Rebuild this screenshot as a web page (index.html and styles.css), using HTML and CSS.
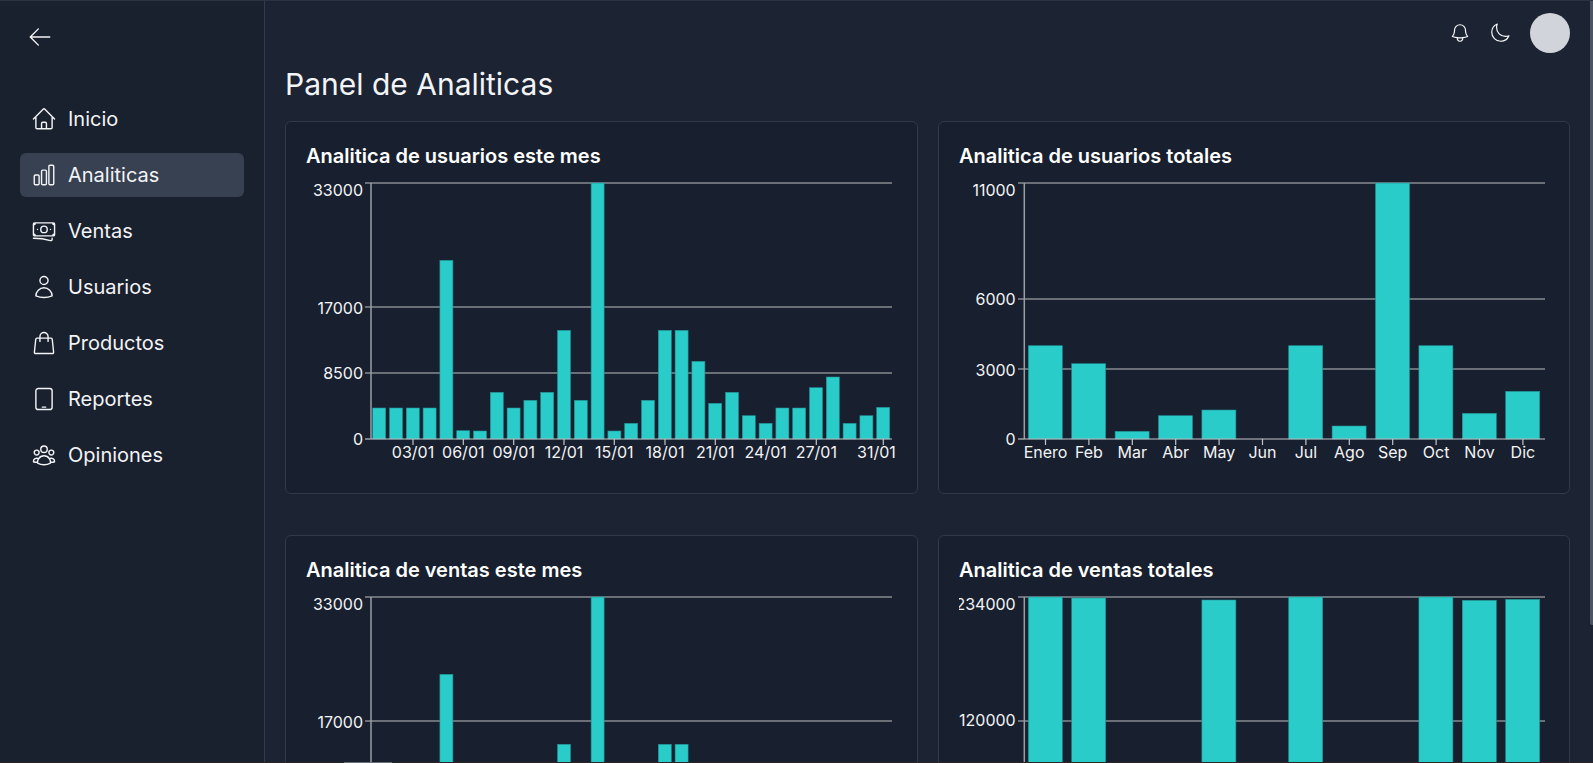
FILE: index.html
```html
<!DOCTYPE html>
<html lang="es">
<head>
    <meta charset="utf-8">
    <title>Panel de Analiticas</title>
    <link rel="stylesheet" href="styles.css">
</head>
<body>
<div class="app">
    <aside class="sidebar">
        <button class="back-btn" type="button">
            <svg class="icon" viewBox="0 0 24 24"><path d="M10.5 19.5L3 12m0 0l7.5-7.5M3 12h18"/></svg>
        </button>
        <nav class="nav">
            <a class="nav-item" href="#">
                <svg class="icon" viewBox="0 0 24 24"><path d="M2.25 12l8.954-8.955c.44-.439 1.152-.439 1.591 0L21.75 12M4.5 9.75v10.125c0 .621.504 1.125 1.125 1.125H9.75v-4.875c0-.621.504-1.125 1.125-1.125h2.25c.621 0 1.125.504 1.125 1.125V21h4.125c.621 0 1.125-.504 1.125-1.125V9.75M8.25 21h8.25"/></svg>
                Inicio
            </a>
            <a class="nav-item active" href="#">
                <svg class="icon" viewBox="0 0 24 24"><path d="M3 13.125C3 12.504 3.504 12 4.125 12h2.25c.621 0 1.125.504 1.125 1.125v6.75C7.5 20.496 6.996 21 6.375 21h-2.25A1.125 1.125 0 013 19.875v-6.75zM9.75 8.625c0-.621.504-1.125 1.125-1.125h2.25c.621 0 1.125.504 1.125 1.125v11.25c0 .621-.504 1.125-1.125 1.125h-2.25a1.125 1.125 0 01-1.125-1.125V8.625zM16.5 4.125c0-.621.504-1.125 1.125-1.125h2.25C20.496 3 21 3.504 21 4.125v15.75c0 .621-.504 1.125-1.125 1.125h-2.25a1.125 1.125 0 01-1.125-1.125V4.125z"/></svg>
                Analiticas
            </a>
            <a class="nav-item" href="#">
                <svg class="icon" viewBox="0 0 24 24"><path d="M2.25 18.75a60.07 60.07 0 0115.797 2.101c.727.198 1.453-.342 1.453-1.096V18.75M3.75 4.5v.75A.75.75 0 013 6h-.75m0 0v-.375c0-.621.504-1.125 1.125-1.125H20.25M2.25 6v9m18-10.5v.75c0 .414.336.75.75.75h.75m-1.5-1.5h.375c.621 0 1.125.504 1.125 1.125v9.75c0 .621-.504 1.125-1.125 1.125h-.375m1.5-1.5H21a.75.75 0 00-.75.75v.75m0 0H3.75m0 0h-.375a1.125 1.125 0 01-1.125-1.125V15m1.5 1.5v-.75A.75.75 0 003 15h-.75M15 10.5a3 3 0 11-6 0 3 3 0 016 0zm3 0h.008v.008H18V10.5zm-12 0h.008v.008H6V10.5z"/></svg>
                Ventas
            </a>
            <a class="nav-item" href="#">
                <svg class="icon" viewBox="0 0 24 24"><path d="M15.75 6a3.75 3.75 0 11-7.5 0 3.75 3.75 0 017.5 0zM4.501 20.118a7.5 7.5 0 0114.998 0A17.933 17.933 0 0112 21.75c-2.676 0-5.216-.584-7.499-1.632z"/></svg>
                Usuarios
            </a>
            <a class="nav-item" href="#">
                <svg class="icon" viewBox="0 0 24 24"><path d="M15.75 10.5V6a3.75 3.75 0 10-7.5 0v4.5m11.356-1.993l1.263 12c.07.665-.45 1.243-1.119 1.243H4.25a1.125 1.125 0 01-1.12-1.243l1.264-12A1.125 1.125 0 015.513 7.5h12.974c.576 0 1.059.435 1.119 1.007z"/></svg>
                Productos
            </a>
            <a class="nav-item" href="#">
                <svg class="icon" viewBox="0 0 24 24"><path d="M10.5 19.5h3m-6.75 2.25h10.5a2.25 2.25 0 002.25-2.25v-15a2.25 2.25 0 00-2.25-2.25H6.75A2.25 2.25 0 004.5 4.5v15a2.25 2.25 0 002.25 2.25z"/></svg>
                Reportes
            </a>
            <a class="nav-item" href="#">
                <svg class="icon" viewBox="0 0 24 24"><path d="M18 18.72a9.094 9.094 0 003.741-.479 3 3 0 00-4.682-2.72m.94 3.198l.001.031c0 .225-.012.447-.037.666A11.944 11.944 0 0112 21c-2.17 0-4.207-.576-5.963-1.584A6.062 6.062 0 016 18.719m12 0a5.971 5.971 0 00-.941-3.197m0 0A5.995 5.995 0 0012 12.75a5.995 5.995 0 00-5.058 2.772m0 0a3 3 0 00-4.681 2.72 8.986 8.986 0 003.74.477m.94-3.197a5.971 5.971 0 00-.94 3.197M15 6.75a3 3 0 11-6 0 3 3 0 016 0zm6 3a2.25 2.25 0 11-4.5 0 2.25 2.25 0 014.5 0zm-13.5 0a2.25 2.25 0 11-4.5 0 2.25 2.25 0 014.5 0z"/></svg>
                Opiniones
            </a>
        </nav>
    </aside>

    <main class="main">
        <header class="topbar">
            <svg class="icon icon-top icon-bell" viewBox="0 0 24 24"><path d="M14.857 17.082a23.848 23.848 0 005.454-1.31A8.967 8.967 0 0118 9.75v-.7V9A6 6 0 006 9v.75a8.967 8.967 0 01-2.312 6.022c1.733.64 3.56 1.085 5.455 1.31m5.714 0a24.255 24.255 0 01-5.714 0m5.714 0a3 3 0 11-5.714 0"/></svg>
            <svg class="icon icon-top" viewBox="0 0 24 24"><path d="M21.752 15.002A9.718 9.718 0 0118 15.75c-5.385 0-9.75-4.365-9.75-9.75 0-1.33.266-2.597.748-3.752A9.753 9.753 0 003 11.25C3 16.635 7.365 21 12.75 21a9.753 9.753 0 009.002-5.998z"/></svg>
            <div class="avatar"></div>
        </header>

        <h1 class="page-title">Panel de Analiticas</h1>

        <section class="grid">
            <!-- usuarios este mes -->
            <article class="card">
                <h2 class="card-title">Analitica de usuarios este mes</h2>
                <svg class="chart" viewBox="0 0 591 297">
                    <path class="grid-line" d="M59 7H586M59 131H586M59 197H586"/>
                    <path class="axis-y" d="M65 7V263M59 263H65"/>
                    <g class="bars">
                        <rect x="66.7" y="232" width="13" height="31"/>
                        <rect x="83.5" y="232" width="13" height="31"/>
                        <rect x="100.3" y="232" width="13" height="31"/>
                        <rect x="117.1" y="232" width="13" height="31"/>
                        <rect x="133.9" y="84.3" width="13" height="178.7"/>
                        <rect x="150.7" y="254.7" width="13" height="8.3"/>
                        <rect x="167.5" y="255" width="13" height="8"/>
                        <rect x="184.3" y="216.3" width="13" height="46.7"/>
                        <rect x="201.1" y="232" width="13" height="31"/>
                        <rect x="217.9" y="224.3" width="13" height="38.7"/>
                        <rect x="234.7" y="216.3" width="13" height="46.7"/>
                        <rect x="251.5" y="154.3" width="13" height="108.7"/>
                        <rect x="268.3" y="224.3" width="13" height="38.7"/>
                        <rect x="285.1" y="7" width="13" height="256"/>
                        <rect x="301.9" y="255" width="13" height="8"/>
                        <rect x="318.7" y="247.3" width="13" height="15.7"/>
                        <rect x="335.5" y="224.3" width="13" height="38.7"/>
                        <rect x="352.3" y="154.3" width="13" height="108.7"/>
                        <rect x="369.1" y="154.3" width="13" height="108.7"/>
                        <rect x="385.9" y="185.3" width="13" height="77.7"/>
                        <rect x="402.7" y="227.3" width="13" height="35.7"/>
                        <rect x="419.5" y="216.3" width="13" height="46.7"/>
                        <rect x="436.3" y="239.7" width="13" height="23.3"/>
                        <rect x="453.1" y="247.3" width="13" height="15.7"/>
                        <rect x="469.9" y="232" width="13" height="31"/>
                        <rect x="486.7" y="232" width="13" height="31"/>
                        <rect x="503.5" y="211.7" width="13" height="51.3"/>
                        <rect x="520.3" y="201" width="13" height="62"/>
                        <rect x="537.1" y="247.3" width="13" height="15.7"/>
                        <rect x="553.9" y="239.7" width="13" height="23.3"/>
                        <rect x="570.7" y="231.3" width="13" height="31.7"/>
                    </g>
                    <path class="axis-x" d="M65 263H586M107 263V269M157.3 263V269M207.7 263V269M258 263V269M308.3 263V269M359 263V269M409.3 263V269M459.7 263V269M510.3 263V269M577.3 263V269"/>
                    <g class="labels-y">
                        <text x="57" y="20">33000</text>
                        <text x="57" y="137.5">17000</text>
                        <text x="57" y="203">8500</text>
                        <text x="57" y="269">0</text>
                    </g>
                    <g class="labels-x">
                        <text x="107" y="282">03/01</text>
                        <text x="157.3" y="282">06/01</text>
                        <text x="207.7" y="282">09/01</text>
                        <text x="258" y="282">12/01</text>
                        <text x="308.3" y="282">15/01</text>
                        <text x="359" y="282">18/01</text>
                        <text x="409.3" y="282">21/01</text>
                        <text x="459.7" y="282">24/01</text>
                        <text x="510.3" y="282">27/01</text>
                        <text x="570.5" y="282">31/01</text>
                    </g>
                </svg>
            </article>

            <!-- usuarios totales -->
            <article class="card">
                <h2 class="card-title">Analitica de usuarios totales</h2>
                <svg class="chart" viewBox="0 0 591 297">
                    <path class="grid-line" d="M59 7H586M59 123H586M59 193H586"/>
                    <path class="axis-y" d="M65.3 7V263M59 263H65"/>
                    <g class="bars">
                        <rect x="69.3" y="169.7" width="34" height="93.3"/>
                        <rect x="112.7" y="187.7" width="34" height="75.3"/>
                        <rect x="156.1" y="255.3" width="34" height="7.7"/>
                        <rect x="199.5" y="239.7" width="34" height="23.3"/>
                        <rect x="242.9" y="234" width="34" height="29"/>
                        <rect x="329.7" y="169.7" width="34" height="93.3"/>
                        <rect x="373.1" y="250" width="34" height="13"/>
                        <rect x="416.5" y="7" width="34" height="256"/>
                        <rect x="459.9" y="169.7" width="34" height="93.3"/>
                        <rect x="503.3" y="237.3" width="34" height="25.7"/>
                        <rect x="546.7" y="215.3" width="34" height="47.7"/>
                    </g>
                    <path class="axis-x" d="M65 263H586M86.5 263V269M129.9 263V269M173.3 263V269M216.7 263V269M260.1 263V269M303.5 263V269M346.9 263V269M390.3 263V269M433.7 263V269M477.1 263V269M520.5 263V269M563.9 263V269"/>
                    <g class="labels-y">
                        <text x="56.7" y="20">11000</text>
                        <text x="56.7" y="129">6000</text>
                        <text x="56.7" y="199.5">3000</text>
                        <text x="56.7" y="269">0</text>
                    </g>
                    <g class="labels-x">
                        <text x="86.5" y="282">Enero</text>
                        <text x="129.9" y="282">Feb</text>
                        <text x="173.3" y="282">Mar</text>
                        <text x="216.7" y="282">Abr</text>
                        <text x="260.1" y="282">May</text>
                        <text x="303.5" y="282">Jun</text>
                        <text x="346.9" y="282">Jul</text>
                        <text x="390.3" y="282">Ago</text>
                        <text x="433.7" y="282">Sep</text>
                        <text x="477.1" y="282">Oct</text>
                        <text x="520.5" y="282">Nov</text>
                        <text x="563.9" y="282">Dic</text>
                    </g>
                </svg>
            </article>

            <!-- ventas este mes -->
            <article class="card">
                <h2 class="card-title">Analitica de ventas este mes</h2>
                <svg class="chart" viewBox="0 0 591 297">
                    <path class="grid-line" d="M59 7H586M59 131H586"/>
                    <path class="axis-y" d="M65 7V263"/>
                    <g class="bars">
                        <rect x="133.9" y="84.3" width="13" height="178.7"/>
                        <rect x="251.5" y="154.3" width="13" height="108.7"/>
                        <rect x="285.1" y="7" width="13" height="256"/>
                        <rect x="352.3" y="154.3" width="13" height="108.7"/>
                        <rect x="369.1" y="154.3" width="13" height="108.7"/>
                    </g>
                    <g class="labels-y">
                        <text x="57" y="20">33000</text>
                        <text x="57" y="137.5">17000</text>
                    </g>
                </svg>
            </article>

            <!-- ventas totales -->
            <article class="card">
                <h2 class="card-title">Analitica de ventas totales</h2>
                <svg class="chart" viewBox="0 0 591 297">
                    <path class="grid-line" d="M59 7H586M59 131H586"/>
                    <path class="axis-y" d="M65.3 7V263"/>
                    <g class="bars">
                        <rect x="69.3" y="7" width="34" height="256"/>
                        <rect x="112.7" y="8" width="34" height="255"/>
                        <rect x="242.9" y="10" width="34" height="253"/>
                        <rect x="329.7" y="7" width="34" height="256"/>
                        <rect x="459.9" y="7" width="34" height="256"/>
                        <rect x="503.3" y="10.3" width="34" height="252.7"/>
                        <rect x="546.7" y="9.3" width="34" height="253.7"/>
                    </g>
                    <g class="labels-y">
                        <text x="56.7" y="20">234000</text>
                        <text x="56.7" y="136.3">120000</text>
                    </g>
                </svg>
            </article>
        </section>
    </main>
    <div class="scroll-thumb"></div>
</div>
</body>
</html>
```
FILE: styles.css
```css
* {
    box-sizing: border-box;
}
html, body {
    margin: 0;
    height: 100%;
    overflow: hidden;
}
body {
    font-family: Inter, "Noto Sans", sans-serif;
    background-color: #1c2332;
    color: #e5e7eb;
}
.app {
    display: flex;
    height: 100vh;
    border-top: 1px solid #2c3343;
    border-bottom: 1px solid #2a2522;
    position: relative;
}
/* strip of the window behind, along the bottom edge */
.app::after {
    content: "";
    position: absolute;
    left: 344px;
    bottom: -1px;
    width: 48px;
    height: 1px;
    background-color: #6b6f76;
}
.scroll-thumb {
    position: absolute;
    top: 0;
    right: 0;
    width: 3px;
    height: 624px;
    background-color: #4b5563;
    border-bottom-left-radius: 2px;
}

/* sidebar */
.sidebar {
    flex: 0 0 265px;
    padding: 23px 20px 0;
    background-color: #19202e;
    border-right: 1px solid #333b4c;
}
.back-btn {
    display: block;
    width: 26px;
    height: 26px;
    margin: 0 0 47px 7px;
    padding: 0;
    background: none;
    border: none;
    color: #f3f4f6;
}
.icon {
    display: block;
    flex: none;
    width: 26px;
    height: 26px;
    fill: none;
    stroke: currentColor;
    stroke-width: 1.3;
    stroke-linecap: round;
    stroke-linejoin: round;
}
.icon-top {
    width: 22px;
    height: 22px;
}
.icon-bell {
    margin-right: -1px;
}
.nav {
    display: flex;
    flex-direction: column;
    gap: 12px;
}
.nav-item {
    display: flex;
    align-items: center;
    gap: 11px;
    height: 44px;
    padding-left: 11px;
    border-radius: 6px;
    color: #f3f4f6;
    font-size: 20px;
    text-decoration: none;
}
.nav-item.active {
    background-color: #374151;
}

/* main */
.main {
    flex: 1;
    min-width: 0;
    padding: 12px 23px 20px 20px;
    overflow: hidden;
}
.topbar {
    display: flex;
    justify-content: flex-end;
    align-items: center;
    gap: 19px;
    color: #f9fafb;
}
.avatar {
    width: 40px;
    height: 40px;
    border-radius: 50%;
    background-color: #d1d5db;
}
.page-title {
    margin: 13px 0 19px;
    font-size: 30px;
    line-height: 36px;
    font-weight: 400;
    color: #f3f4f6;
}
.grid {
    display: grid;
    grid-template-columns: 633px 632px;
    gap: 41px 20px;
}
.card {
    padding: 20px 19px 20px 20px;
    background-color: #181f2e;
    border: 1px solid #323a48;
    border-radius: 6px;
}
.card-title {
    margin: 0 0 6px;
    font-size: 20px;
    line-height: 28px;
    font-weight: 600;
    color: #fff;
}

/* charts */
.chart {
    display: block;
    width: 591px;
    height: 297px;
}
.chart text {
    font-size: 16px;
    fill: #f3f4f6;
}
.grid-line {
    fill: none;
    stroke: #878a90;
    stroke-width: 1.5;
}
.axis-y {
    fill: none;
    stroke: #9a9ea5;
    stroke-width: 1.5;
}
.axis-x {
    fill: none;
    stroke: #c2c5ca;
    stroke-width: 1.2;
}
.bars rect {
    fill: #2accc9;
    stroke: #1f8f93;
    stroke-width: 0.6;
}
.labels-y text {
    text-anchor: end;
}
.labels-x text {
    text-anchor: middle;
}
```
